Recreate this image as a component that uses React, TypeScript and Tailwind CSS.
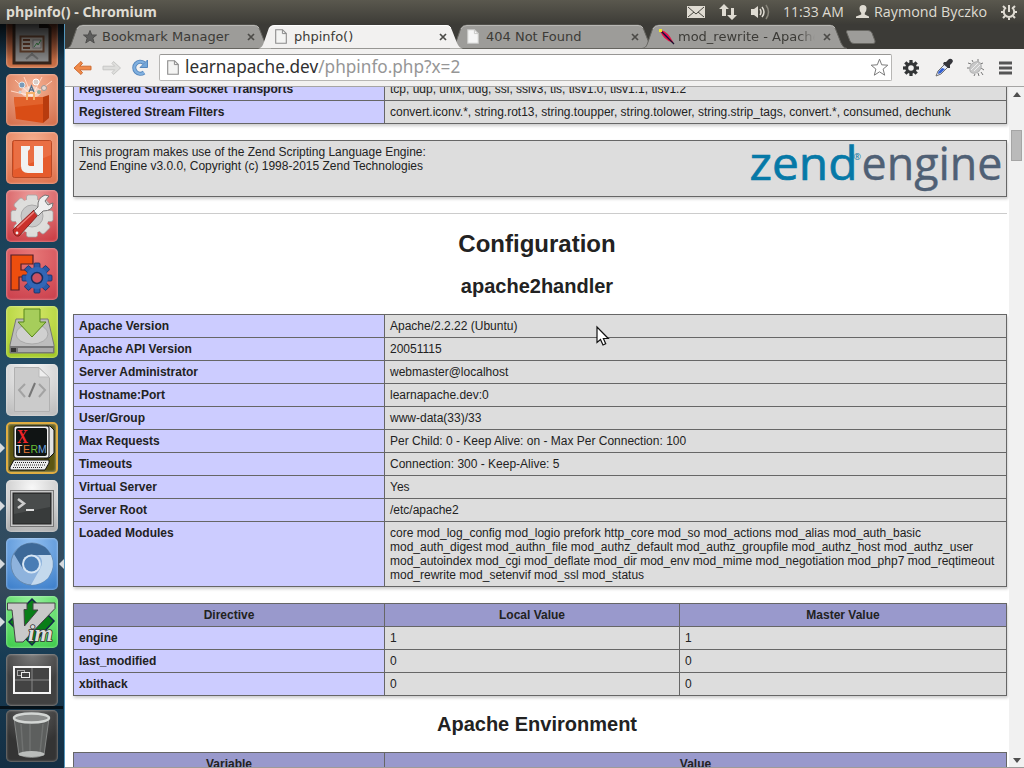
import React from "react";

type Row = [string, string];

const streamRows: Row[] = [
  ["Registered Stream Socket Transports", "tcp, udp, unix, udg, ssl, sslv3, tls, tlsv1.0, tlsv1.1, tlsv1.2"],
  ["Registered Stream Filters", "convert.iconv.*, string.rot13, string.toupper, string.tolower, string.strip_tags, convert.*, consumed, dechunk"],
];

const handlerRows: Row[] = [
  ["Apache Version", "Apache/2.2.22 (Ubuntu)"],
  ["Apache API Version", "20051115"],
  ["Server Administrator", "webmaster@localhost"],
  ["Hostname:Port", "learnapache.dev:0"],
  ["User/Group", "www-data(33)/33"],
  ["Max Requests", "Per Child: 0 - Keep Alive: on - Max Per Connection: 100"],
  ["Timeouts", "Connection: 300 - Keep-Alive: 5"],
  ["Virtual Server", "Yes"],
  ["Server Root", "/etc/apache2"],
  [
    "Loaded Modules",
    "core mod_log_config mod_logio prefork http_core mod_so mod_actions mod_alias mod_auth_basic\nmod_auth_digest mod_authn_file mod_authz_default mod_authz_groupfile mod_authz_host mod_authz_user\nmod_autoindex mod_cgi mod_deflate mod_dir mod_env mod_mime mod_negotiation mod_php7 mod_reqtimeout\nmod_rewrite mod_setenvif mod_ssl mod_status",
  ],
];

const directives: Row[] = [["engine", "1"], ["last_modified", "0"], ["xbithack", "0"]];

const shadow = "shadow-[1px_2px_3px_#ccc]";

function InfoRows({ rows }: { rows: Row[] }) {
  return (
    <>
      {rows.map(([k, v]) => (
        <div key={k} className="flex">
          <div className="w-[311px] shrink-0 border-r border-b border-[#666] bg-[#ccccff] px-[5px] py-1 font-bold">{k}</div>
          <div className="grow whitespace-pre border-r border-b border-[#666] bg-[#ddd] px-[5px] py-1">{v}</div>
        </div>
      ))}
    </>
  );
}

function Doc({ className, fill = "#f4f4f3", stroke = "#8c8c8c" }: { className?: string; fill?: string; stroke?: string }) {
  return (
    <svg className={className} width="12" height="15" viewBox="0 0 12 15">
      <path d="M.7.7H7.5L11.3 4.5V14.3H.7Z" fill={fill} stroke={stroke} strokeWidth="1.1" />
      <path d="M7.4.9V4.6H11.2" fill="none" stroke={stroke} />
    </svg>
  );
}

function Tab({ title, icon, active, fade }: { title: string; icon: React.ReactNode; active?: boolean; fade?: boolean }) {
  const bg = active ? "#f2f1f0" : "#9d9c99";
  return (
    <div className={`relative -mr-[13px] h-[25px] w-[205px] shrink-0 ${active ? "z-10" : "z-0"}`}>
      <svg className="absolute inset-0" width="205" height="25">
        <path
          d="M0 24.5C4 24 5 21 6 18L10.5 5Q12 1 17 1H188Q192 1 193.5 5L199 19Q201 24 205 24.5Z"
          fill={bg}
          stroke={active ? "none" : "#65645f"}
        />
        <path d="M11 5Q12.5 1.5 17 1.5H188Q191.5 1.5 193 4" fill="none" stroke={active ? "#fff" : "#b9b8b5"} />
      </svg>
      <div className="relative flex h-[25px] items-center pl-[17px] text-[13px] text-[#3c3b37]">
        <div className="flex w-[19px] items-center">{icon}</div>
        <div className={`w-[137px] overflow-hidden whitespace-nowrap ${fade ? "[mask-image:linear-gradient(to_right,black_88%,transparent)]" : ""}`}>
          {title}
        </div>
        <svg className="ml-[8px]" width="8" height="8">
          <path d="M1 1L7 7M7 1L1 7" stroke="#4c4b48" strokeWidth="1.7" />
        </svg>
      </div>
    </div>
  );
}

function Tile({ bg, children, left, right }: { bg: string; children: React.ReactNode; left?: boolean; right?: boolean }) {
  return (
    <div className="flex h-[52px] w-16 shrink-0 items-center">
      <svg width="6" height="12">{left && <path d="M0 1L5 6L0 11Z" fill="#d6dade" />}</svg>
      <div className={`h-[52px] w-[52px] overflow-hidden rounded-[5px] shadow-[inset_0_0_2px_1px_rgba(255,255,255,0.3)] ${bg}`}>
        <svg width="52" height="52" viewBox="0 0 52 52">{children}</svg>
      </div>
      <svg width="6" height="12">{right && <path d="M6 1L1 6L6 11Z" fill="#d6dade" />}</svg>
    </div>
  );
}

const spokes = [0, 45, 90, 135];

function Launcher() {
  return (
    <div className="relative flex h-[744px] w-16 shrink-0 flex-col gap-[6px] overflow-hidden bg-[linear-gradient(180deg,#143348_0%,#173d54_20%,#28506a_55%,#35495a_76%,#173c54_85%,#142f44_100%)]">
      <div className="-mt-2 flex">
        <Tile bg="bg-[linear-gradient(#6b3220,#cd7146)]">
          <path d="M8 0H34L44 12V47H8Z" fill="#858585" stroke="#35241b" strokeWidth="3" />
          <path d="M33 0V12H44" fill="#231a15" />
          <rect x="14.5" y="20.5" width="23" height="15" fill="#a8a19a" stroke="#63402d" strokeWidth="2" />
          <path d="M17 24H24M17 28H24M17 32H24" stroke="#623927" strokeWidth="2" />
          <rect x="27" y="24" width="8" height="8" fill="#bbb" stroke="#777" />
          <path d="M28 31L31 27L32 29L35 24" stroke="#3b8246" fill="none" />
          <path d="M26 36V40M20 43L26 38L32 43" stroke="#666" strokeWidth="2" fill="none" />
        </Tile>
      </div>
      <Tile bg="bg-[radial-gradient(circle_at_50%_25%,#f5b294,#d26b48)]">
        <path d="M26 22L9 6M26 22L18 3M26 22L36 3M26 22L46 7M26 22L5 17" stroke="#ffd8c6" strokeWidth="1" />
        <ellipse cx="25" cy="18" rx="10" ry="6" fill="#fff" opacity=".45" />
        <circle cx="16" cy="11" r="3" fill="#789ab9" stroke="#dfe5e9" />
        <circle cx="30" cy="8" r="3" fill="#d9ccc7" stroke="#fff" />
        <circle cx="38" cy="14" r="2.5" fill="#e8d8cf" stroke="#999" />
        <circle cx="14" cy="18" r="1.5" fill="#cbd6dc" />
        <path d="M23 18L25.5 12L28 18M24 16H27" fill="none" stroke="#55718c" strokeWidth="1.4" />
        <circle cx="33" cy="18" r="2" fill="#8cac9b" />
        <path d="M37 23L43 21V44L37 49Z" fill="#b83b0e" />
        <path d="M8 23L37 23L37 49L10 45Z" fill="#d94d16" />
        <path d="M8 23H37V30L9 33Z" fill="#e2622c" />
        <path d="M21 26V19H28V26" fill="none" stroke="#f4b06c" strokeWidth="2" />
      </Tile>
      <Tile bg="bg-[radial-gradient(circle_at_50%_20%,#f7b090,#dc6d48)]">
        <rect x="6.5" y="8.5" width="39" height="37" rx="2" fill="#e55b2c" stroke="#b84925" />
        <path d="M8 9H45V23L8 38Z" fill="#f08861" opacity=".45" />
        <path d="M15 14L24 14V17L22 19V32Q22 34 25 34H28V14H37V41H22Q15 41 15 34Z" fill="#f1f1f1" />
      </Tile>
      <Tile bg="bg-[radial-gradient(circle_at_50%_15%,#ed9e9c,#c9363e)]">
        {spokes.map((a) => (
          <rect key={a} x="20.5" y="5" width="11" height="42" rx="2" fill="#dcdcda" stroke="#a1a1a1" strokeWidth=".7" transform={`rotate(${a} 26 26)`} />
        ))}
        <circle cx="26" cy="26" r="17" fill="#dededc" />
        <circle cx="26" cy="26" r="11" fill="#c9c9c9" stroke="#aaa" />
        <path d="M7 40L28 20L32 25L13 46Q8 47 7 40Z" fill="#ca302b" stroke="#8a211f" />
        <path d="M11 38L28 22" stroke="#ed817b" strokeWidth="1.5" />
        <path d="M28 21L32 17Q31 8 39 5L43 6L39 11L42 15L47 13Q47 21 37 21L32 26Z" fill="#eee" stroke="#747474" />
        <circle cx="11" cy="43" r="1.4" fill="#eee" />
      </Tile>
      <Tile bg="bg-[radial-gradient(circle_at_50%_15%,#e77777,#ca3e4b)]">
        <path d="M5 7H27V16H15V22H25V29H13V42H5Z" fill="#ed4e0e" stroke="#501e28" strokeWidth="1.2" />
        {spokes.map((a) => (
          <rect key={a} x="28" y="15" width="6" height="30" rx="1" fill="#2b59a6" stroke="#182e61" strokeWidth=".8" transform={`rotate(${a} 31 30)`} />
        ))}
        <circle cx="31" cy="30" r="11" fill="#3266b6" />
        <circle cx="31" cy="30" r="5.5" fill="#cc5160" stroke="#182e61" strokeWidth="1.5" />
      </Tile>
      <Tile bg="bg-[radial-gradient(circle_at_50%_15%,#d6e86b,#9dc71f)]">
        <path d="M10 13H42L48 39V47H4V39Z" fill="#bdbdbd" stroke="#777" />
        <ellipse cx="26" cy="28" rx="16" ry="10" fill="#d0d0d0" stroke="#aaa" />
        <path d="M4 40H48V47H4Z" fill="#777" />
        <path d="M12 42H47V46H12Z" fill="#aaa" />
        <path d="M5 42H10V46H5Z" fill="#333" />
        <path d="M18 3H34V16H40L26 31L12 16H18Z" fill="#a6cd5b" stroke="#578719" />
      </Tile>
      <Tile bg="bg-[radial-gradient(circle_at_50%_15%,#f4f4f4,#b9b9b9)]">
        <path d="M8.5 3.5H33L43.5 14V47.5H8.5Z" fill="#cbcbcb" stroke="#b1b1b1" />
        <path d="M33 4V13H43Z" fill="#eee" stroke="#bbb" />
        <path d="M19 20L13 26L19 33M33 20L39 26L33 33" fill="none" stroke="#a3a3a3" strokeWidth="2" />
        <path d="M29 19L23 33" stroke="#777" strokeWidth="2" />
      </Tile>
      <Tile left bg="bg-[#5c5612] border-2 border-[#dfad42]">
        <g transform="translate(-2 -2)">
          <path d="M40 4H44L48 8V31L43 36H38Z" fill="#e3e3e3" stroke="#111" />
          <rect x="8" y="4" width="35" height="32" rx="2" fill="#f1f1f1" stroke="#111" />
          <rect x="10" y="6" width="31" height="28" rx="2" fill="#101414" />
          <text x="11" y="20.5" fontFamily="Liberation Serif, serif" fontWeight="bold" fontSize="19" fill="#ef2429" textLength="11" lengthAdjust="spacingAndGlyphs">X</text>
          <g fontFamily="Liberation Sans, sans-serif" fontSize="10.5">
            <text x="10" y="31" fill="#fff">T</text><text x="17" y="31" fill="#e47835">E</text>
            <text x="24.5" y="31" fill="#66bd38">R</text><text x="32" y="31" fill="#69a0df">M</text>
          </g>
          <path d="M8 38H43V41L39 48H4V45Z" fill="#ededed" stroke="#111" />
          <path d="M9 40.5H40M8 43H39M7 45.5H37" stroke="#222" strokeDasharray="1 1" />
        </g>
      </Tile>
      <Tile left bg="bg-[radial-gradient(circle_at_50%_15%,#f8f8f8,#aaa)]">
        <rect x="4.5" y="10.5" width="43" height="36" fill="#c8c8c8" stroke="#777" />
        <rect x="7" y="13" width="38" height="31" fill="#383b3b" stroke="#222" />
        <path d="M8 14H44V27L8 34Z" fill="#494c4c" />
        <path d="M12 19L18 23.5L12 28" fill="none" stroke="#ccc" strokeWidth="2.5" />
        <path d="M20 30H28" stroke="#ddd" strokeWidth="2" />
      </Tile>
      <Tile left right bg="bg-[radial-gradient(circle_at_50%_15%,#91bff0,#397cc9)]">
        <circle cx="26" cy="26" r="21" fill="#8eb3dd" stroke="#6689ad" />
        <path d="M8 16Q14 5 26 5Q40 6 45 17H26L17 31Z" fill="#3d6998" />
        <path d="M45 17Q50 29 42 40Q35 47 25 47L34 31Q39 22 32 17Z" fill="#c4d9ed" />
        <circle cx="25.5" cy="26" r="9.5" fill="#d7e6f4" />
        <circle cx="25.5" cy="26" r="7.5" fill="#497db5" />
      </Tile>
      <Tile left bg="bg-[radial-gradient(circle_at_50%_20%,#9bf3a0,#3acb47)]">
        <path d="M26 3L48 25L26 49L3 26Z" fill="#097e18" stroke="#14264c" strokeWidth="1.5" />
        <path d="M1.5 7H21V13.5H18L18.5 30L32 14H27V7H49V12.5L17 46H9.5L6 14H1.5Z" fill="#c9c9c9" stroke="#444" />
        <text x="22" y="45" fontFamily="Liberation Serif, serif" fontSize="23" fontStyle="italic" fontWeight="bold" fill="#ddd" stroke="#333" strokeWidth="1.6" paintOrder="stroke" textLength="25" lengthAdjust="spacingAndGlyphs">im</text>
      </Tile>
      <Tile bg="bg-[radial-gradient(circle_at_50%_0%,#7b7b7b,#414141_55%)]">
        <rect x="8" y="13" width="36" height="26" fill="#434343" stroke="#f5f5f5" strokeWidth="2" />
        <path d="M26 14V38M9 26H43" stroke="#888" />
        <rect x="11.5" y="16.5" width="7" height="5" fill="none" stroke="#aaa" />
        <rect x="15.5" y="18.5" width="8" height="5" fill="#444" stroke="#eee" />
      </Tile>
      <div className="-mt-[6px] h-0 w-[63px] border-t-[3px] border-[#06121a]" />
      <div className="-mt-[5px]">
        <Tile bg="bg-[radial-gradient(circle_at_50%_0%,#606060,#343434_60%)]">
          <path d="M8 8L13 45Q26 50 38 45L43 8Z" fill="#5d5f5e" stroke="#838584" />
          <path d="M15 14L17 43M24 14L24 43M37 14L34 43" stroke="#6f7170" strokeWidth="1.5" />
          <ellipse cx="25.5" cy="8" rx="17.5" ry="4.5" fill="#8b8d8c" stroke="#d3d6d4" strokeWidth="2.5" />
          <ellipse cx="25.5" cy="44" rx="13" ry="3" fill="#babdbb" />
        </Tile>
      </div>
      <div className="pointer-events-none absolute inset-x-0 top-0 h-9 bg-gradient-to-b from-black/80 to-transparent" />
    </div>
  );
}

function SystemBar() {
  return (
    <div className="flex h-6 items-center bg-[linear-gradient(#5a584e,#3d3c37)] font-['Open_Sans','Noto_Sans',sans-serif] text-[#dfdbd2]">
      <span className="w-[687px] whitespace-nowrap pl-[6px] font-['Noto_Sans',sans-serif] text-[14.2px] font-bold">phpinfo() - Chromium</span>
      <svg width="18" height="13" viewBox="0 0 18 13">
        <rect width="18" height="12" fill="#dfdbd2" />
        <path d="M1 1L9 8L17 1M1 11L7 6M17 11L11 6" fill="none" stroke="#47463f" />
      </svg>
      <svg className="ml-[14px]" width="18" height="16">
        <path d="M5 0L10 5H7V12H3V5H0ZM12 4H15V11H18L13 16L8 11H12Z" fill="#dfdbd2" />
      </svg>
      <svg className="ml-[13px]" width="21" height="16">
        <path d="M1 5H4L8 2V14L4 11H1Z" fill="#dfdbd2" />
        <path d="M10 5Q12 8 10 11M12 3Q16 8 12 13" fill="none" stroke="#dfdbd2" strokeWidth="1.5" />
        <path d="M16 1Q21 8 16 15" fill="none" stroke="#88857b" strokeWidth="1.5" />
      </svg>
      <span className="ml-[12px] w-[73px] whitespace-nowrap pb-px text-[14px]">11:33 AM</span>
      <svg width="14" height="14">
        <path d="M3.5 3.5Q3.5 0 7 0T10.5 3.5Q10.5 7 8.8 8V9.5L13 11.5V13H0V11.5L5.2 9.5V8Q3.5 7 3.5 3.5Z" fill="#dfdbd2" />
      </svg>
      <span className="ml-[4px] w-[126px] whitespace-nowrap pb-px text-[14.3px]">Raymond Byczko</span>
      <svg width="18" height="18" viewBox="0 0 18 18">
        <g fill="none" stroke="#dfdbd2" strokeWidth="2">
          <path d="M6 4.5A5.2 5.2 0 1 0 12 4.5M9 2V9" />
          <path d="M1 9H3M15 9H17M9 15V17M3 3L5 5M13 5L15 3M3 15L5 13M13 13L15 15" />
        </g>
      </svg>
    </div>
  );
}

function Toolbar() {
  return (
    <div className="flex h-[38px] items-center border-b border-[#a6a5a4] bg-[#f2f1f0]">
      <svg className="ml-2" width="20" height="16" viewBox="0 0 20 16">
        <path d="M1 8L8 1.5L9.5 3.5L6.8 6.2H18V9.8H6.8L9.5 12.5L8 14.5Z" fill="#f08a49" stroke="#cd6a31" />
      </svg>
      <svg className="ml-[9px]" width="20" height="16" viewBox="0 0 20 16">
        <path d="M18.5 8L11.5 1.5L10 3.5L12.7 6.2H1V9.8H12.7L10 12.5L11.5 14.5Z" fill="#dededc" stroke="#c7c7c5" />
      </svg>
      <svg className="ml-[9px]" width="18" height="18" viewBox="0 0 18 18">
        <path d="M13 4A6 6 0 1 0 13 13.5" fill="none" stroke="#5687bd" strokeWidth="4.2" />
        <path d="M13 4A6 6 0 1 0 13 13.5" fill="none" stroke="#80b0df" strokeWidth="2.4" />
        <path d="M16.5 1V8.5H9Z" fill="#72a6d9" stroke="#5687bd" />
      </svg>
      <div className="ml-[10px] flex h-[27px] w-[733px] items-center rounded-[2px] border border-[#b7b6b4] border-t-[#979694] bg-white">
        <Doc className="ml-[7px]" />
        <span className="ml-[6px] w-[688px] whitespace-nowrap pb-px font-['Noto_Sans',sans-serif] text-[17.2px] leading-none text-[#303030]">
          learnapache.dev<span className="text-[#969696]">/phpinfo.php?x=2</span>
        </span>
        <svg className="-ml-[3px]" width="19" height="19" viewBox="0 0 19 19">
          <path d="M9.5 1.2L11.7 6.8L17.8 7.2L13.1 11.1L14.7 17.2L9.5 13.8L4.3 17.2L5.9 11.1L1.2 7.2L7.3 6.8Z" fill="#fff" stroke="#7b7b7b" strokeLinejoin="round" />
        </svg>
      </div>
      <svg className="ml-[10px]" width="18" height="18" viewBox="0 0 18 18">
        {spokes.map((a) => <rect key={a} x="7.4" y="1" width="3.2" height="16" fill="#333536" transform={`rotate(${a} 9 9)`} />)}
        <circle cx="9" cy="9" r="5.8" fill="#333536" />
        <circle cx="9" cy="9" r="2.8" fill="#f2f1f0" />
      </svg>
      <svg className="ml-[14px]" width="20" height="20" viewBox="0 0 20 20">
        <path d="M2 18L4 13L12 5L15 8L7 16Z" fill="#e8eefc" stroke="#707070" />
        <path d="M4 16L4.5 13.5L8 10L11 11L7 15Z" fill="#315ed0" />
        <path d="M10 4L12 4L15 1Q18 0 19 3L18 5L16 7V10L14 10L9 6Z" fill="#35363b" />
      </svg>
      <svg className="ml-[12px]" width="20" height="20" viewBox="0 0 20 20">
        <path d="M5 6L2 5M7 4L6 2M12 4L12 1M4 10H1M15 14L17 17M12 15L13 18M9 16L8 18M15 10L18 12M14 6L17 5" stroke="#777" />
        <ellipse cx="9.5" cy="9.5" rx="6.5" ry="5" fill="#c9c9c9" stroke="#b2b2b2" transform="rotate(-45 9.5 9.5)" />
        <path d="M5 12L12 5M8 13L14 7" stroke="#eee" />
      </svg>
      <svg className="ml-[12px]" width="15" height="14">
        <path d="M1 2H14M1 7H14M1 12H14" stroke="#555" strokeWidth="3" />
      </svg>
    </div>
  );
}

function HeaderRow({ cells }: { cells: [string, string][] }) {
  return (
    <div className="flex bg-[#9999cc] text-center font-bold">
      {cells.map(([label, width]) => (
        <div key={label} className={`${width} border-r border-b border-[#666] px-[5px] py-1`}>{label}</div>
      ))}
    </div>
  );
}

function PhpInfo() {
  return (
    <div className="h-[681px] w-[944px] shrink-0 overflow-hidden bg-white font-['Liberation_Sans',Arial,sans-serif] text-[12px] leading-[14px] text-[#222]">
      <div className="-mt-[9px] ml-2 w-[934px]">
        <div className={`border-l border-[#666] ${shadow}`}><InfoRows rows={streamRows} /></div>
        <div className={`mt-4 flex h-[57px] justify-between border border-[#666] bg-[#ddd] ${shadow}`}>
          <div className="px-[5px] py-1 whitespace-nowrap">This program makes use of the Zend Scripting Language Engine:<br />Zend Engine v3.0.0, Copyright (c) 1998-2015 Zend Technologies</div>
          <svg width="257" height="55" viewBox="0 0 257 55" fontFamily="Open Sans, sans-serif">
            <text x="0.5" y="38.5" fontSize="46" fill="#0679a7" stroke="#0679a7" strokeWidth=".7" textLength="108" lengthAdjust="spacingAndGlyphs">zend</text>
            <text x="104.5" y="19" fontSize="9" fill="#0679a7">®</text>
            <text x="112.5" y="38.5" fontSize="46" fill="#4f6075" stroke="#4f6075" strokeWidth=".4" textLength="141" lengthAdjust="spacingAndGlyphs">engine</text>
          </svg>
        </div>
        <div className="mt-4 h-px bg-[#ccc]" />
        <h1 className="flex h-[60px] items-center justify-center pr-[6px] text-[24px] font-bold leading-7">Configuration</h1>
        <h2 className="flex h-[40px] items-start justify-center pr-[6px] text-[20px] font-bold leading-6">apache2handler</h2>
        <div className={`border-t border-l border-[#666] ${shadow}`}><InfoRows rows={handlerRows} /></div>
        <div className={`mt-4 border-t border-l border-[#666] ${shadow}`}>
          <HeaderRow cells={[["Directive", "w-[311px]"], ["Local Value", "w-[295px]"], ["Master Value", "w-[327px]"]]} />
          {directives.map(([k, v]) => (
            <div key={k} className="flex bg-[#ddd]">
              <div className="w-[311px] border-r border-b border-[#666] bg-[#ccccff] px-[5px] py-1 font-bold">{k}</div>
              <div className="w-[295px] border-r border-b border-[#666] px-[5px] py-1">{v}</div>
              <div className="w-[327px] border-r border-b border-[#666] px-[5px] py-1">{v}</div>
            </div>
          ))}
        </div>
        <h2 className="flex h-[56px] items-center justify-center pr-[6px] text-[20px] font-bold leading-6">Apache Environment</h2>
        <div className="border-t border-l border-[#666]">
          <HeaderRow cells={[["Variable", "w-[311px]"], ["Value", "w-[622px]"]]} />
        </div>
      </div>
    </div>
  );
}

export default function App() {
  return (
    <div className="relative h-[768px] w-[1024px] overflow-hidden bg-white">
      <SystemBar />
      <div className="flex">
        <Launcher />
        <div className="h-[744px] w-px shrink-0 bg-[#5396bd]" />
        <div className="w-[959px]">
          <div className="flex h-[25px] bg-[#3c3b37] pl-px font-['DejaVu_Sans',sans-serif]">
            <Tab title="Bookmark Manager" icon={<svg width="14" height="14" viewBox="0 0 14 14"><path d="M7 .5L8.8 5H13.5L9.8 8L11.2 13L7 10L2.8 13L4.2 8L.5 5H5.2Z" fill="#5d5d5c" stroke="#4e4e4c" /></svg>} />
            <Tab title="phpinfo()" active icon={<Doc />} />
            <Tab title="404 Not Found" icon={<Doc fill="#f5f5f5" stroke="#c9c9c7" />} />
            <Tab
              title="mod_rewrite - Apache HTTP"
              fade
              icon={
                <svg width="16" height="16" viewBox="0 0 16 16">
                  <path d="M2 2Q8 3 13 12.5Q5 10 2 2Z" fill="#7d16a3" stroke="#ed1245" strokeWidth="1.6" />
                  <path d="M2 2L15 15" stroke="#18102e" strokeWidth="1.2" />
                  <path d="M0 0H3V3H0Z" fill="#eee52b" />
                </svg>
              }
            />
            <svg className="ml-[10px]" width="33" height="25"><path d="M3 6.5H24Q27 6.5 28 9L31 17Q31.5 19.5 29 19.5H10Q7 19.5 6 17L2.5 8Z" fill="#9d9c99" stroke="#686762" /></svg>
          </div>
          <Toolbar />
          <div className="flex">
            <PhpInfo />
            <div className="flex h-[681px] w-[15px] flex-col items-center bg-[#f1f1f1]">
              <svg className="mt-[5px]" width="8" height="5"><path d="M0 5L4 0L8 5Z" fill="#4f4f4f" /></svg>
              <div className="mt-[33px] h-[31px] w-[11px] border border-[#a5a5a5] bg-[#bababa]" />
              <svg className="mt-auto mb-[5px]" width="8" height="5"><path d="M0 0L4 5L8 0Z" fill="#4f4f4f" /></svg>
            </div>
          </div>
        </div>
      </div>
      <svg className="absolute left-[596px] top-[325px]" width="14" height="22" viewBox="0 0 14 22">
        <path d="M1 2V17.5L4.5 14.5L7 20L9.7 18.8L7.4 13.5H12.3Z" fill="#fff" stroke="#111" strokeWidth="1.2" />
      </svg>
      <div className="absolute bottom-0 left-[65px] h-px w-[959px] bg-[#9c9b99]" />
    </div>
  );
}
